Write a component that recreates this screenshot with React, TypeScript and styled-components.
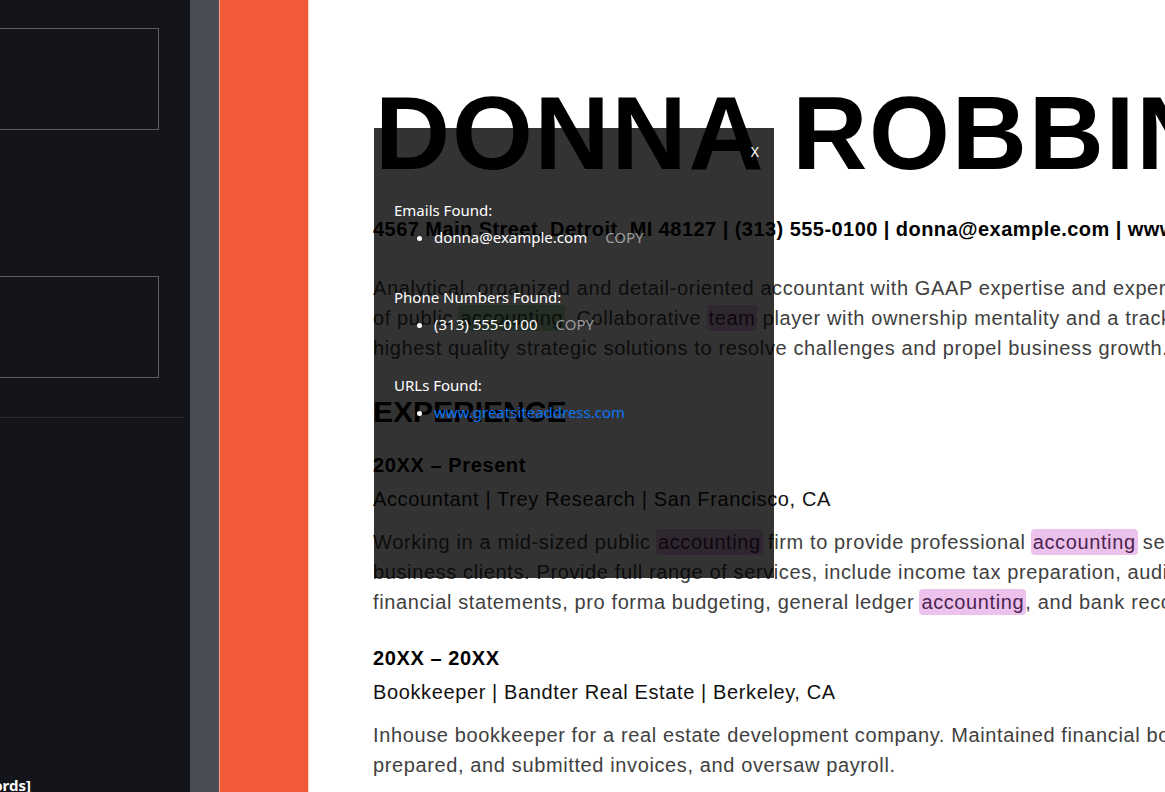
import React from "react";
import styled, { createGlobalStyle } from "styled-components";

const Global = createGlobalStyle`
  html, body { margin: 0; padding: 0; height: 100%; overflow: hidden; background: #fff; }
  #root { height: 100%; }
`;

const Shell = styled.div`
  display: flex;
  height: 792px;
  width: 1165px;
  overflow: hidden;
  position: relative;
`;

const SidePanel = styled.aside`
  width: 190px;
  flex: none;
  background: #14151a;
  display: flex;
  flex-direction: column;
  padding-top: 28px;
  box-sizing: border-box;
  overflow: hidden;
`;

const FieldBox = styled.div<{ $gap: number }>`
  margin-left: -20px;
  margin-top: ${(p) => p.$gap}px;
  width: 179px;
  height: 102px;
  box-sizing: border-box;
  border: 1px solid #5d5e61;
  flex: none;
`;

const Divider = styled.div`
  margin-top: 39px;
  width: 183px;
  height: 1px;
  background: #2c2d32;
  flex: none;
`;

const WordCount = styled.div`
  margin-top: auto;
  width: 31px;
  height: 14px;
  overflow: hidden;
  display: flex;
  justify-content: flex-end;
  align-items: flex-start;
  color: #fff;
  font-family: "Noto Sans", "Open Sans", sans-serif;
  font-weight: 700;
  font-size: 15px;
  line-height: 22px;
  white-space: nowrap;
  & > span { margin-top: -4px; }
`;

const Scrollbar = styled.div`
  width: 29px;
  flex: none;
  background: #4a4d56;
`;

const Accent = styled.div`
  width: 90px;
  flex: none;
  box-sizing: border-box;
  background: #f15a37;
  border-left: 1px solid #f4a08a;
  border-right: 1px solid #fbd3c6;
`;

const Page = styled.main`
  flex: 1;
  min-width: 0;
  background: #fff;
  overflow: hidden;
  padding: 81px 0 0 64px;
  box-sizing: border-box;
  font-family: "Liberation Sans", Arial, sans-serif;
  white-space: nowrap;
`;

const Name = styled.h1`
  margin: 0 0 0 2px;
  font-size: 104px;
  line-height: 104px;
  font-weight: 700;
  color: #000;
  letter-spacing: 1.8px;
`;

const Contact = styled.p`
  margin: 29px 0 0;
  font-size: 20px;
  line-height: 30px;
  font-weight: 700;
  color: #000;
  letter-spacing: 0.45px;
`;

const Body = styled.p<{ $top: number }>`
  margin: ${(p) => p.$top}px 0 0;
  font-size: 20px;
  line-height: 30px;
  color: #404040;
  letter-spacing: 0.62px;
`;

const Section = styled.h2`
  margin: 29px 0 0;
  font-size: 30px;
  line-height: 40px;
  font-weight: 700;
  color: #000;
`;

const Dates = styled.h3<{ $top: number }>`
  margin: ${(p) => p.$top}px 0 0;
  font-size: 20px;
  line-height: 30px;
  font-weight: 700;
  color: #000;
  letter-spacing: 0.6px;
`;

const Role = styled.p`
  margin: 4px 0 0;
  font-size: 20px;
  line-height: 30px;
  color: #111;
  letter-spacing: 0.62px;
`;

const Mark = styled.span<{ $tone: "pink" | "green" }>`
  background: ${(p) => (p.$tone === "pink" ? "#ecc2ec" : "#b6e4b6")};
  color: ${(p) => (p.$tone === "pink" ? "#4c2450" : "#2f4a2f")};
  border-radius: 4px;
  padding: 2px 2px;
  margin: 0 -1px;
`;

const Popup = styled.div`
  position: absolute;
  left: 374px;
  top: 128px;
  width: 400px;
  height: 450px;
  box-sizing: border-box;
  background: rgba(0, 0, 0, 0.8);
  padding: 14px 15px 0 20px;
  font-family: "Noto Sans", "Open Sans", sans-serif;
  font-size: 15px;
  color: #fff;
`;

const CloseRow = styled.div`
  display: flex;
  justify-content: flex-end;
  line-height: 20px;
  height: 20px;
`;

const CloseBtn = styled.button`
  background: none;
  border: 0;
  padding: 0;
  color: #fff;
  font: inherit;
  font-size: 14px;
  line-height: 20px;
  cursor: pointer;
`;

const Group = styled.section<{ $top: number }>`
  margin-top: ${(p) => p.$top}px;
`;

const GroupTitle = styled.div`
  line-height: 20px;
`;

const Items = styled.ul`
  margin: 7px 0 0;
  padding-left: 40px;
  line-height: 20px;
`;

const Item = styled.li`
  white-space: nowrap;
`;

const Link = styled.a`
  color: #0b74f5;
  text-decoration: none;
`;

const Copy = styled.span`
  margin-left: 18px;
  color: #9c9c9c;
`;

export default function App() {
  return (
    <>
      <Global />
      <Shell>
        <SidePanel>
          <FieldBox $gap={0} />
          <FieldBox $gap={146} />
          <Divider />
          <WordCount>
            <span>[Keywords]</span>
          </WordCount>
        </SidePanel>
        <Scrollbar />
        <Accent />
        <Page>
          <Name>DONNA ROBBINS</Name>
          <Contact>
            4567 Main Street, Detroit, MI 48127 | (313) 555-0100 | donna@example.com | www.greatsiteaddress.com
          </Contact>
          <Body $top={29}>
            Analytical, organized and detail-oriented accountant with GAAP expertise and experience in the full spectrum
            <br />
            of public <Mark $tone="green">accounting</Mark>. Collaborative <Mark $tone="pink">team</Mark> player with
            ownership mentality and a track record of delivering the
            <br />
            highest quality strategic solutions to resolve challenges and propel business growth.
          </Body>
          <Section>EXPERIENCE</Section>
          <Dates $top={18}>20XX – Present</Dates>
          <Role>Accountant | Trey Research | San Francisco, CA</Role>
          <Body $top={13}>
            Working in a mid-sized public <Mark $tone="pink">accounting</Mark> firm to provide professional{" "}
            <Mark $tone="pink">accounting</Mark> services to individual and
            <br />
            business clients. Provide full range of services, include income tax preparation, audits, review of
            <br />
            financial statements, pro forma budgeting, general ledger <Mark $tone="pink">accounting</Mark>, and bank
            reconciliations.
          </Body>
          <Dates $top={26}>20XX – 20XX</Dates>
          <Role>Bookkeeper | Bandter Real Estate | Berkeley, CA</Role>
          <Body $top={13}>
            Inhouse bookkeeper for a real estate development company. Maintained financial books, developed,
            <br />
            prepared, and submitted invoices, and oversaw payroll.
          </Body>
        </Page>
        <Popup>
          <CloseRow>
            <CloseBtn>X</CloseBtn>
          </CloseRow>
          <Group $top={38}>
            <GroupTitle>Emails Found:</GroupTitle>
            <Items>
              <Item>
                donna@example.com<Copy>COPY</Copy>
              </Item>
            </Items>
          </Group>
          <Group $top={40}>
            <GroupTitle>Phone Numbers Found:</GroupTitle>
            <Items>
              <Item>
                (313) 555-0100<Copy>COPY</Copy>
              </Item>
            </Items>
          </Group>
          <Group $top={41}>
            <GroupTitle>URLs Found:</GroupTitle>
            <Items>
              <Item>
                <Link href="#">www.greatsiteaddress.com</Link>
              </Item>
            </Items>
          </Group>
        </Popup>
      </Shell>
    </>
  );
}
